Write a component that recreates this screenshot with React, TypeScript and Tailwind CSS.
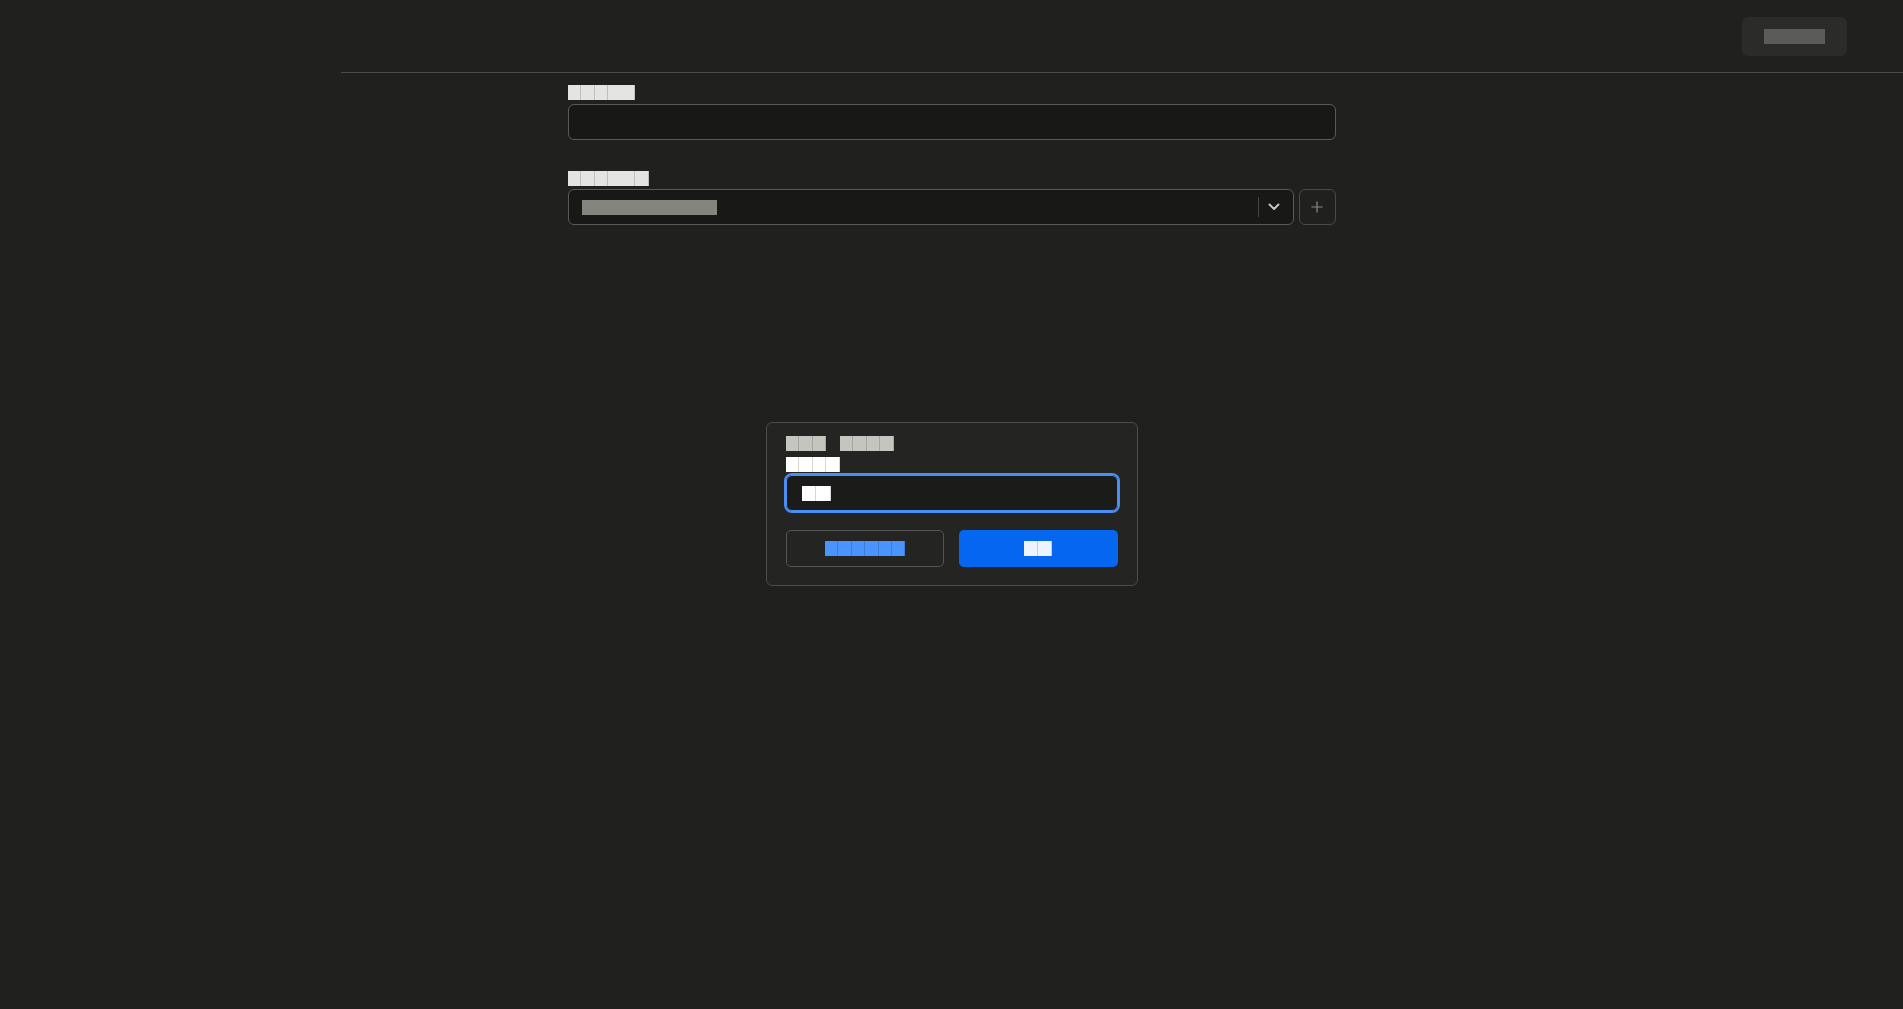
import React from "react"

// Each glyph of the reference is drawn as a filled cell (missing-glyph boxes),
// so text is kept as real text but rendered transparent on a coloured cell.
type Cells = { text: string; widths: number[]; className: string }

function Blocks({ text, widths, className }: Cells) {
  const chars = Array.from(text)
  return (
    <span className="inline-flex h-[15px] select-none">
      {chars.map((ch, i) => (
        <span
          key={i}
          className={[
            "inline-block h-full overflow-hidden text-[12px] leading-[15px] text-transparent shadow-[inset_-1px_0_0_rgba(0,0,0,0.16)]",
            className,
          ].join(" ")}
          style={{ width: widths[i] ?? 13 }}
        >
          {ch}
        </span>
      ))}
    </span>
  )
}

function Solid({ text, width, className }: { text: string; width: number; className: string }) {
  return (
    <span
      className={[
        "inline-block h-[15px] whitespace-nowrap text-[12px] leading-[15px] text-transparent select-none",
        className,
      ].join(" ")}
      style={{ width }}
    >
      {text}
    </span>
  )
}

function ChevronDown() {
  return (
    <svg width="12" height="8" viewBox="0 0 12 8" fill="none" aria-hidden>
      <polyline
        points="1.5,1.5 6,6 10.5,1.5"
        stroke="#c8c8c4"
        strokeWidth="1.9"
        strokeLinecap="round"
        strokeLinejoin="round"
      />
    </svg>
  )
}

function Plus() {
  return (
    <svg width="12" height="12" viewBox="0 0 12 12" fill="none" aria-hidden>
      <path d="M6 0.5v11M0.5 6h11" stroke="#8a8a88" strokeWidth="1.2" />
    </svg>
  )
}

export default function App() {
  return (
    <div className="min-h-screen bg-[#20201e] font-['Noto_Sans_CJK_JP','Noto_Sans',sans-serif]">
      <div className="flex">
        <div className="w-[341px] shrink-0" />
        <header className="flex h-[73px] flex-1 items-start justify-end border-b border-[#4a4a48] pr-[56px] pt-[17px]">
          <button className="flex h-[39px] w-[105px] items-center justify-center rounded-[6px] bg-[#2b2b2a]">
            <Solid text="ログアウト" width={61} className="bg-[#5b5b59]" />
          </button>
        </header>
      </div>

      <main className="mx-auto w-[768px] pt-[12px]">
        <div className="flex h-[15px]">
          <Blocks text="タイトル" widths={[13, 14, 13, 27]} className="bg-[#e4e4e3]" />
        </div>
        <input
          className="mt-[4px] block h-[36px] w-full rounded-[6px] border border-[#5a5a58] bg-[#181817] px-[13px] text-[13px] text-white outline-none"
          defaultValue=""
        />

        <div className="mt-[31px] flex h-[15px]">
          <Blocks text="カテゴリー" widths={[13, 14, 13, 27, 14]} className="bg-[#e4e4e3]" />
        </div>
        <div className="mt-[3px] flex gap-[5px]">
          <div className="flex h-[36px] flex-1 items-center rounded-[6px] border border-[#5a5a58] bg-[#181817] pl-[13px]">
            <Solid text="カテゴリーを選択" width={135} className="bg-[#858580]" />
            <div className="flex-1" />
            <div className="h-[20px] w-px bg-[#454543]" />
            <div className="flex w-[34px] items-center justify-center pr-[3px]">
              <ChevronDown />
            </div>
          </div>
          <button className="flex h-[36px] w-[37px] items-center justify-center rounded-[6px] border border-[#4a4a48]">
            <Plus />
          </button>
        </div>
      </main>

      <div className="fixed inset-0 flex items-start justify-center pt-[422px]">
        <div className="w-[372px] rounded-[6px] border border-[#4c4c4a] bg-[#242423] px-[19px] pb-[18px] pt-[13px]">
          <div className="flex h-[15px] gap-[14px]">
            <Blocks text="新しい" widths={[13, 14, 13]} className="bg-[#c5c5c0]" />
            <Blocks text="カテゴリ" widths={[13, 14, 13, 14]} className="bg-[#c5c5c0]" />
          </div>
          <div className="mt-[6px] flex h-[15px]">
            <Blocks text="表示名称" widths={[13, 14, 13, 14]} className="bg-[#ffffff]" />
          </div>
          <div className="mt-[3px] flex h-[36px] items-center rounded-[6px] border border-[#4a8ff5] bg-[#1b1b1a] pl-[15px] outline-2 outline-[#4a8ff5]">
            <Blocks text="仕事" widths={[14, 15]} className="bg-[#ffffff]" />
          </div>
          <div className="mt-[19px] grid grid-cols-2 gap-[15px]">
            <button className="flex h-[37px] items-center justify-center rounded-[5px] border border-[#555553]">
              <Blocks text="いいえ、戻る" widths={[13, 14, 13, 14, 13, 13]} className="bg-[#4a94ff]" />
            </button>
            <button className="flex h-[37px] items-center justify-center rounded-[5px] bg-[#0566f0]">
              <Blocks text="追加" widths={[14, 14]} className="bg-[#eef4ff]" />
            </button>
          </div>
        </div>
      </div>
    </div>
  )
}
